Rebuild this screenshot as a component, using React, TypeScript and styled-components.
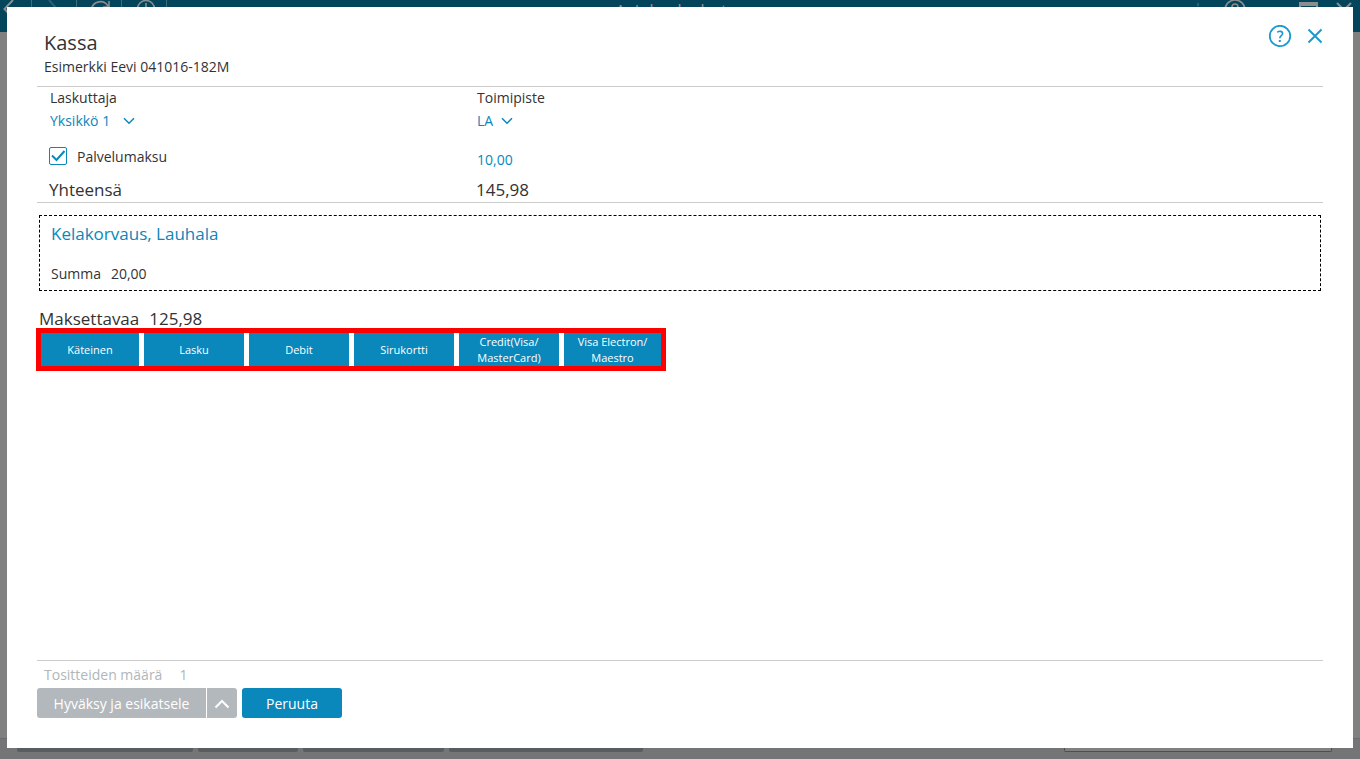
import React, { useState } from "react";
import styled, { createGlobalStyle } from "styled-components";

const blue = "#0a87bb";
const iconBlue = "#1c9ad0";
const ink = "#333333";
const rule = "#cccccc";

const GlobalStyle = createGlobalStyle`
  *, *::before, *::after { box-sizing: border-box; }
  body {
    margin: 0;
    font-family: "Open Sans", "Noto Sans", sans-serif;
    font-size: 14px;
    line-height: 20px;
    color: ${ink};
  }
  button, input, select { font: inherit; color: inherit; margin: 0; padding: 0; border: 0; background: none; }
  h1, h2, p { margin: 0; font-weight: 400; }
`;

/* Page behind the dialog */
const Backdrop = styled.div`
  min-height: 100vh;
  display: flex;
  flex-direction: column;
  background: #808080;
`;

const TopBar = styled.header`
  height: 32px;
  display: grid;
  grid-template-columns: 1fr auto 1fr;
  align-items: start;
  background: #04455c;
  color: #8b8d8e;
  overflow: hidden;
`;

const BarGroup = styled.div`
  display: flex;
`;

const BarButton = styled.button`
  width: 45px;
  height: 32px;
  border-right: 1px solid #3f6b7b;
  &:first-child { width: 32px; }
  svg { display: block; margin: 0 auto; height: 32px; }
`;

const BarTitle = styled.div`
  margin-right: 18px;
  font-size: 18px;
  line-height: 22px;
`;

const WindowGroup = styled.div`
  display: flex;
  justify-content: flex-end;
  svg { display: block; }
`;

const BottomBar = styled.footer`
  height: 21px;
  margin-top: auto;
  padding: 0 28px 7px 17px;
  display: flex;
  gap: 5px;
  border-top: 1px solid #6a6c6e;
  background: #747577;
`;

const ShadeButton = styled.button<{ $width: number }>`
  width: ${(p) => p.$width}px;
  background: #5a5d5f;
  border-radius: 0 0 2px 2px;
`;

const ShadeInput = styled.input`
  width: 268px;
  margin-left: auto;
  background: #808080;
  border: 1px solid #4c4e50;
  border-top: 0;
  border-radius: 0 0 2px 2px;
`;

/* Dialog */
const Dialog = styled.section`
  position: fixed;
  inset: 7px 7px 11px;
  padding: 22px 30px 30px;
  display: flex;
  flex-direction: column;
  overflow: auto;
  background: #ffffff;
`;

const DialogHeader = styled.header`
  padding: 0 0 9px 7px;
  display: flex;
  justify-content: space-between;
`;

const Title = styled.h1`
  font-size: 20px;
  line-height: 28px;
`;

const HeaderActions = styled.div`
  margin: -4px -3px 0 0;
  display: flex;
  align-items: flex-start;
  gap: 12px;
`;

const IconButton = styled.button`
  height: 24px;
  color: ${iconBlue};
  cursor: pointer;
  svg { display: block; }
`;

const Form = styled.div`
  padding: 1px 12px 0;
  display: grid;
  grid-template-columns: 427px 1fr;
  border-top: 1px solid ${rule};
  border-bottom: 1px solid ${rule};
`;

const Field = styled.div`
  padding-left: 1px;
  height: 59px;
  display: flex;
  flex-direction: column;
  align-items: flex-start;
  gap: 3px;
`;

const SelectBox = styled.div`
  position: relative;
  color: ${blue};
  svg { position: absolute; right: 0; top: 6px; pointer-events: none; }
`;

const Select = styled.select<{ $gap: number }>`
  display: block;
  appearance: none;
  field-sizing: content;
  padding-right: ${(p) => p.$gap + 12}px;
  height: 20px;
  line-height: 20px;
`;

const CheckLabel = styled.label`
  height: 31px;
  display: flex;
  align-items: flex-start;
  gap: 10px;
`;

const CheckBox = styled.span`
  position: relative;
  width: 18px;
  height: 18px;
  color: ${blue};
  input {
    display: block;
    appearance: none;
    width: 18px;
    height: 18px;
    border: 1px solid ${blue};
    border-radius: 2px;
  }
  svg { position: absolute; left: 0; top: 0; pointer-events: none; }
  input:not(:checked) + svg { display: none; }
`;

const Amount = styled.input`
  width: 100px;
  height: 20px;
  margin: 3px 0 0 1px;
  color: ${blue};
`;

const Total = styled.div`
  font-size: 17px;
  line-height: 24px;
`;

const Refund = styled.section`
  margin: 12px 2px 0;
  height: 76px;
  padding: 6px 11px;
  display: flex;
  flex-direction: column;
  justify-content: space-between;
  border: 1px dashed #000000;
`;

const RefundTitle = styled.h2`
  font-size: 17px;
  line-height: 24px;
  color: ${blue};
`;

const Pair = styled.p`
  display: flex;
  gap: 10px;
`;

const Due = styled(Total)`
  margin: 16px 2px 0;
  display: flex;
  gap: 10px;
`;

const PayMethods = styled.div`
  align-self: flex-start;
  margin: -3px 0 0 -1px;
  display: grid;
  grid-template-columns: 98px repeat(4, 100px) 97px;
  grid-auto-rows: 33px;
  gap: 5px;
  border: 5px solid #ff0000;
`;

const PayButton = styled.button`
  background: ${blue};
  color: #ffffff;
  font-size: 11px;
  font-weight: 500;
  line-height: 16px;
  white-space: pre-line;
  cursor: pointer;
`;

const DialogFooter = styled.footer`
  margin-top: auto;
  padding-top: 4px;
  border-top: 1px solid ${rule};
`;

const Copies = styled.label`
  padding-left: 7px;
  display: flex;
  gap: 17px;
  color: #b1b6ba;
  input { width: 60px; height: 20px; }
`;

const Actions = styled.div`
  margin-top: 3px;
  display: flex;
  gap: 5px;
`;

const Split = styled.div`
  display: flex;
  gap: 1px;
`;

const ActionButton = styled.button<{ $width: number; $side?: "left" | "right" }>`
  width: ${(p) => p.$width}px;
  height: 30px;
  padding-top: 1px;
  display: flex;
  align-items: center;
  justify-content: center;
  background: ${(p) => (p.disabled ? "#b3b8bc" : blue)};
  color: #ffffff;
  border-radius: ${(p) =>
    p.$side === "left" ? "3px 0 0 3px" : p.$side === "right" ? "0 3px 3px 0" : "3px"};
`;

const Chevron = () => (
  <svg width="12" height="8" viewBox="0 0 12 8" fill="none" stroke="currentColor" strokeWidth="1.5">
    <path d="M1 1.2 6 6.2 11 1.2" />
  </svg>
);

const methods = [
  "Käteinen",
  "Lasku",
  "Debit",
  "Sirukortti",
  "Credit(Visa/\nMasterCard)",
  "Visa Electron/\nMaestro",
];

export default function App() {
  const [fee, setFee] = useState(true);
  const [amount, setAmount] = useState("10,00");

  return (
    <>
      <GlobalStyle />
      <Backdrop inert>
        <TopBar>
          <BarGroup>
            <BarButton aria-label="Takaisin">
              <svg width="31" height="32" fill="none" stroke="currentColor" strokeWidth="2">
                <path d="M13 0 4.5 9l8.500 9" />
              </svg>
            </BarButton>
            <BarButton aria-label="Eteenpäin">
              <svg width="44" height="32" fill="none" stroke="#2b6075" strokeWidth="2">
                <path d="m17 0 8 9-8 9" />
              </svg>
            </BarButton>
            <BarButton aria-label="Päivitä">
              <svg width="44" height="32" fill="none" stroke="currentColor" strokeWidth="1.6">
                <path d="M14.500 9a9 9 0 0 1 16.500-3M32 1v6h-6" />
              </svg>
            </BarButton>
            <BarButton aria-label="Historia">
              <svg width="44" height="32" fill="none" stroke="currentColor" strokeWidth="1.6">
                <circle cx="24" cy="9" r="8.5" />
                <path d="M24 3v7h5" />
              </svg>
            </BarButton>
          </BarGroup>
          <BarTitle>Asiakaslaskut</BarTitle>
          <WindowGroup>
            <svg width="170" height="32" fill="none" stroke="currentColor" strokeWidth="2">
              <path d="M8 3v3" stroke="#2b6075" />
              <circle cx="45" cy="10" r="10" strokeWidth="1.600" />
              <path d="M42 7c0-4 6-4 6 0" strokeWidth="1.600" />
              <path d="M109 4h19" strokeWidth="4" />
              <path d="M110 4v14h17V4" />
              <path d="m147 3 14 14M161 3l-14 14" />
            </svg>
          </WindowGroup>
        </TopBar>
        <BottomBar>
          <ShadeButton $width={176} />
          <ShadeButton $width={100} />
          <ShadeButton $width={141} />
          <ShadeButton $width={194} />
          <ShadeInput />
        </BottomBar>
      </Backdrop>

      <Dialog role="dialog" aria-modal="true" aria-labelledby="dialog-title">
        <DialogHeader>
          <div>
            <Title id="dialog-title">Kassa</Title>
            <p>Esimerkki Eevi 041016-182M</p>
          </div>
          <HeaderActions>
            <IconButton aria-label="Ohje">
              <svg width="24" height="24" viewBox="0 0 24 24" fill="none" stroke="currentColor">
                <circle cx="12" cy="11" r="10.2" strokeWidth="1.8" />
                <path d="M9.3 7.3c1.6-1.5 5.3-1.4 5.3 1.2 0 2.1-2.8 2.3-2.8 4.8" strokeWidth="1.6" />
                <path d="M11.8 15v2" strokeWidth="2" />
              </svg>
            </IconButton>
            <IconButton aria-label="Sulje">
              <svg width="22" height="24" viewBox="0 0 22 24" fill="none" stroke="currentColor" strokeWidth="2">
                <path d="M4.5 4.5l13 13M17.5 4.5l-13 13" />
              </svg>
            </IconButton>
          </HeaderActions>
        </DialogHeader>

        <Form>
          <Field>
            <label htmlFor="biller">Laskuttaja</label>
            <SelectBox>
              <Select id="biller" $gap={13}>
                <option>Yksikkö 1</option>
              </Select>
              <Chevron />
            </SelectBox>
          </Field>
          <Field>
            <label htmlFor="office">Toimipiste</label>
            <SelectBox>
              <Select id="office" $gap={8}>
                <option>LA</option>
              </Select>
              <Chevron />
            </SelectBox>
          </Field>
          <CheckLabel>
            <CheckBox>
              <input type="checkbox" checked={fee} onChange={(e) => setFee(e.target.checked)} />
              <svg width="18" height="18" fill="none" stroke="currentColor" strokeWidth="2">
                <path d="M3 8.5 7.5 13 15.5 4" />
              </svg>
            </CheckBox>
            Palvelumaksu
          </CheckLabel>
          <Amount aria-label="Palvelumaksu" value={amount} onChange={(e) => setAmount(e.target.value)} />
          <Total>Yhteensä</Total>
          <Total>145,98</Total>
        </Form>

        <Refund>
          <RefundTitle>Kelakorvaus, Lauhala</RefundTitle>
          <Pair>
            <span>Summa</span>
            <span>20,00</span>
          </Pair>
        </Refund>

        <Due>
          <span>Maksettavaa</span>
          <span>125,98</span>
        </Due>
        <PayMethods>
          {methods.map((m) => (
            <PayButton key={m}>{m}</PayButton>
          ))}
        </PayMethods>

        <DialogFooter>
          <Copies>
            Tositteiden määrä
            <input defaultValue="1" disabled />
          </Copies>
          <Actions>
            <Split>
              <ActionButton $width={169} $side="left" disabled>
                Hyväksy ja esikatsele
              </ActionButton>
              <ActionButton $width={30} $side="right" disabled aria-label="Lisää vaihtoehtoja">
                <svg width="16" height="10" fill="none" stroke="currentColor" strokeWidth="2">
                  <path d="M1.5 8.5 8 2l6.5 6.5" />
                </svg>
              </ActionButton>
            </Split>
            <ActionButton $width={100}>Peruuta</ActionButton>
          </Actions>
        </DialogFooter>
      </Dialog>
    </>
  );
}
